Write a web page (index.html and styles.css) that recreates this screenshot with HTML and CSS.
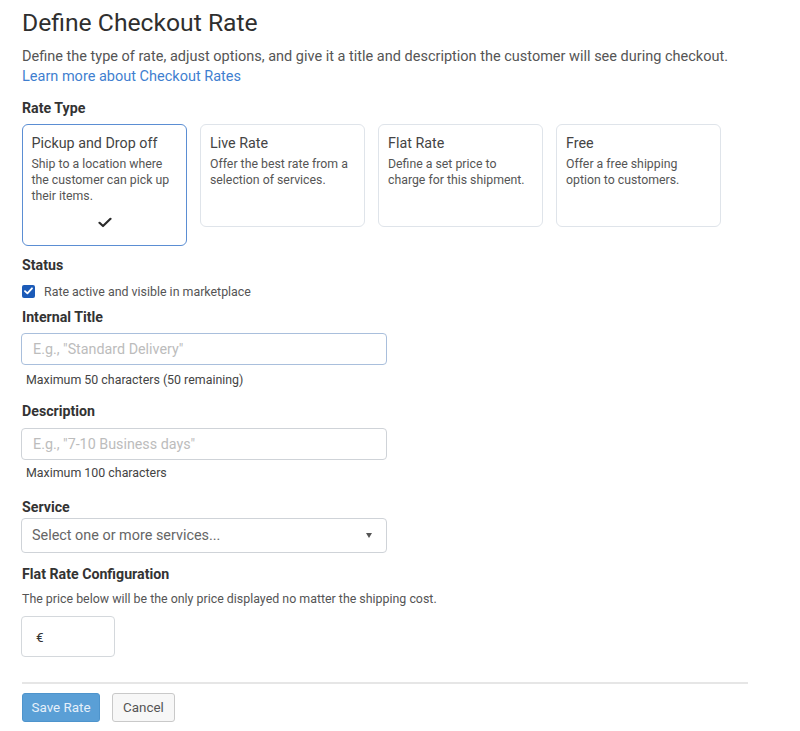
FILE: index.html
```html
<!DOCTYPE html>
<html lang="en">
<head>
<meta charset="utf-8">
<title>Define Checkout Rate</title>
<link rel="stylesheet" href="styles.css">
</head>
<body>
<main class="page">
  <h1 class="title">Define Checkout Rate</h1>
  <p class="intro">Define the type of rate, adjust options, and give it a title and description the customer will see during checkout.</p>
  <a class="link" href="#">Learn more about Checkout Rates</a>

  <div class="label label-ratetype">Rate Type</div>
  <div class="cards">
    <div class="card card-selected">
      <div class="card-title">Pickup and Drop off</div>
      <div class="card-desc">Ship to a location where the customer can pick up their items.</div>
      <div class="card-check">
        <svg width="14" height="11" viewBox="0 0 14 11"><path d="M1.5 5.8 L5 9 L12.5 1.8" fill="none" stroke="#2b2b2b" stroke-width="2.2" stroke-linecap="round" stroke-linejoin="round"/></svg>
      </div>
    </div>
    <div class="card">
      <div class="card-title">Live Rate</div>
      <div class="card-desc">Offer the best rate from a selection of services.</div>
    </div>
    <div class="card">
      <div class="card-title">Flat Rate</div>
      <div class="card-desc">Define a set price to charge for this shipment.</div>
    </div>
    <div class="card">
      <div class="card-title">Free</div>
      <div class="card-desc">Offer a free shipping option to customers.</div>
    </div>
  </div>

  <div class="label label-status">Status</div>
  <label class="check-row">
    <span class="checkbox">
      <svg width="9" height="8" viewBox="0 0 9 8"><path d="M1 4.2 L3.4 6.4 L8 1.3" fill="none" stroke="#fff" stroke-width="1.8" stroke-linecap="round" stroke-linejoin="round"/></svg>
    </span>
    <span class="check-text">Rate active and visible in marketplace</span>
  </label>

  <div class="label label-internal">Internal Title</div>
  <div class="field field-focus"><span class="placeholder">E.g., "Standard Delivery"</span></div>
  <div class="help help-internal">Maximum 50 characters (50 remaining)</div>

  <div class="label label-desc">Description</div>
  <div class="field field-desc"><span class="placeholder">E.g., "7-10 Business days"</span></div>
  <div class="help help-desc">Maximum 100 characters</div>

  <div class="label label-service">Service</div>
  <div class="select">
    <span class="select-text">Select one or more services...</span>
    <span class="caret"></span>
  </div>

  <div class="label label-flat">Flat Rate Configuration</div>
  <div class="flat-help">The price below will be the only price displayed no matter the shipping cost.</div>
  <div class="price"><span class="euro">€</span></div>

  <hr class="divider">

  <div class="actions">
    <button class="btn btn-primary" type="button">Save Rate</button>
    <button class="btn btn-secondary" type="button">Cancel</button>
  </div>
</main>
</body>
</html>
```

FILE: styles.css
```css
* { box-sizing: border-box; }

html, body {
  margin: 0;
  padding: 0;
  background: #ffffff;
}

body {
  font-family: Roboto, "Liberation Sans", Arial, sans-serif;
  color: #333;
}

.page {
  padding: 9px 0 0 22px;
  display: flex;
  flex-direction: column;
  align-items: flex-start;
}

.title {
  margin: 0;
  font-size: 24.7px;
  line-height: 28px;
  font-weight: 400;
  color: #2f2f2f;
}

.intro {
  margin: 10px 0 0;
  font-size: 14.5px;
  line-height: 20px;
  color: #555;
}

.link {
  font-size: 14.5px;
  line-height: 20px;
  color: #3f7fd0;
  text-decoration: none;
}

.label {
  font-size: 14.2px;
  line-height: 18px;
  font-weight: 700;
  color: #333;
}

.label-ratetype { margin-top: 12px; }

.cards {
  margin-top: 7px;
  display: flex;
  align-items: flex-start;
  gap: 13px;
}

.card {
  width: 165px;
  min-height: 103px;
  border: 1px solid #dfe4ea;
  border-radius: 6px;
  padding: 9px 12px 12px 9px;
  background: #fff;
}

.card-selected {
  border: 1.5px solid #5b8ed3;
  padding: 8.5px 11.5px 12.5px 8.5px;
}

.card-title {
  font-size: 14.3px;
  line-height: 18px;
  color: #444;
}

.card-desc {
  margin-top: 4px;
  font-size: 12.3px;
  line-height: 16px;
  color: #555;
}

.card-check {
  margin-top: 9px;
  height: 20px;
  display: flex;
  align-items: center;
  justify-content: center;
  padding-left: 3px;
}

.label-status { margin-top: 10px; }

.check-row {
  margin-top: 8px;
  display: flex;
  align-items: center;
  height: 18px;
}

.checkbox {
  width: 13px;
  height: 13px;
  border-radius: 2px;
  background: #1c5bb8;
  display: flex;
  align-items: center;
  justify-content: center;
}

.check-text {
  margin-left: 9px;
  font-size: 12.4px;
  color: #555;
}

.label-internal { margin-top: 8px; }

.field {
  width: 366px;
  height: 32px;
  border: 1px solid #cfd3d8;
  border-radius: 4px;
  padding: 0 11px;
  display: flex;
  align-items: center;
  margin-left: -1px;
}

.field-focus {
  margin-top: 7px;
  border-color: #a9bfdc;
}

.placeholder {
  font-size: 14.3px;
  color: #bcbcbc;
}

.help {
  font-size: 12.4px;
  line-height: 16px;
  color: #444;
  padding-left: 4px;
}

.help-internal { margin-top: 7px; }

.label-desc { margin-top: 14px; }

.field-desc { margin-top: 8px; }

.help-desc { margin-top: 5px; }

.label-service { margin-top: 17px; }

.select {
  margin-top: 2px;
  margin-left: -1px;
  width: 366px;
  height: 35px;
  border: 1px solid #cfd3d8;
  border-radius: 4px;
  padding: 0 14px 0 10px;
  display: flex;
  align-items: center;
  justify-content: space-between;
}

.select-text {
  font-size: 14.4px;
  color: #666;
}

.caret {
  width: 0;
  height: 0;
  border-left: 3.5px solid transparent;
  border-right: 3.5px solid transparent;
  border-top: 5px solid #555;
}

.label-flat { margin-top: 12px; }

.flat-help {
  margin-top: 8px;
  font-size: 12.4px;
  line-height: 16px;
  color: #555;
}

.price {
  margin-top: 9px;
  margin-left: -1px;
  width: 94px;
  height: 41px;
  border: 1px solid #d4d8dc;
  border-radius: 4px;
  padding-left: 14px;
  display: flex;
  align-items: center;
}

.euro {
  font-size: 13.5px;
  color: #333;
}

.divider {
  align-self: stretch;
  margin: 25px 52px 0 0;
  border: 0;
  border-top: 2px solid #e6e6e6;
  height: 0;
}

.actions {
  margin-top: 9px;
  display: flex;
  gap: 12px;
}

.btn {
  font-family: Roboto, "Liberation Sans", Arial, sans-serif;
  font-size: 13.4px;
  height: 29px;
  border-radius: 3px;
  padding: 0;
  cursor: pointer;
}

.btn-primary {
  width: 78px;
  background: #5a9fd6;
  border: 1px solid #4e94cc;
  color: #e6f0fa;
}

.btn-secondary {
  width: 63px;
  background: #f7f7f7;
  border: 1px solid #c9c9c9;
  color: #555;
}
```
